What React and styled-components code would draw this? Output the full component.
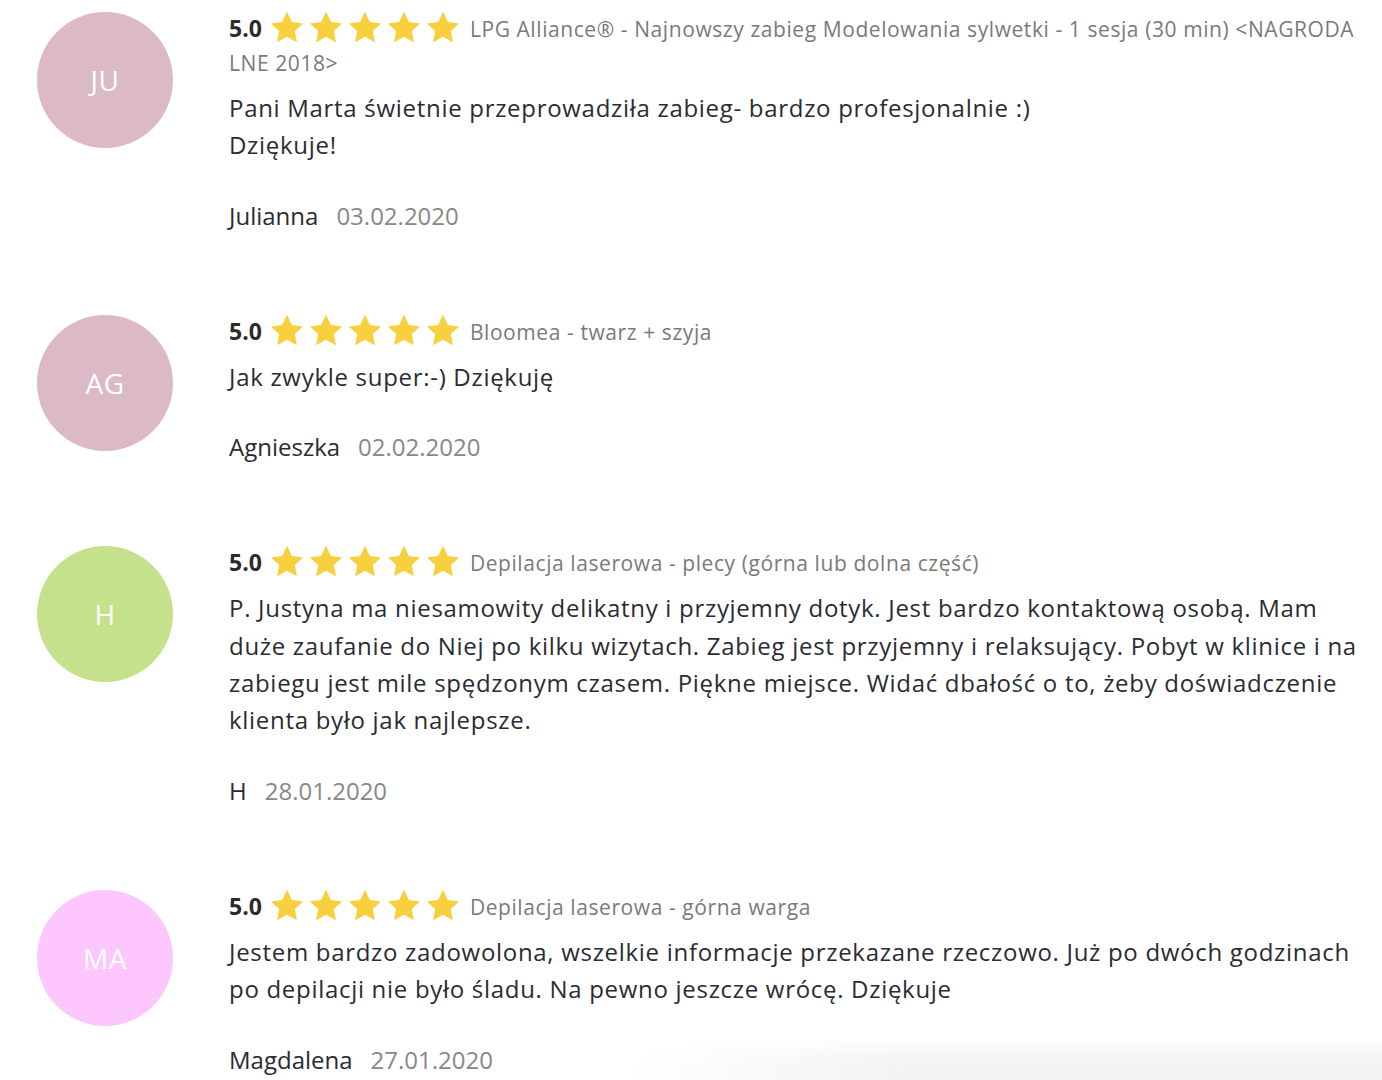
import React from "react";
import styled, { createGlobalStyle } from "styled-components";

const Global = createGlobalStyle`
  html, body { margin: 0; padding: 0; background: #ffffff; }
  body { font-family: "Open Sans", "Noto Sans", sans-serif; }
`;

const Page = styled.div`
  position: relative;
  width: 1382px;
  height: 1080px;
  overflow: hidden;
  background: #fff;
  padding: 11px 16px 0 37px;
  box-sizing: border-box;
  display: flex;
  flex-direction: column;
  gap: 81px;
`;

const Review = styled.div`
  display: flex;
  align-items: flex-start;
  gap: 56px;
`;

const Avatar = styled.div`
  flex: 0 0 136px;
  width: 136px;
  height: 136px;
  margin-top: 1px;
  border-radius: 50%;
  background: ${(p) => p.$color};
  color: #fff;
  display: flex;
  align-items: center;
  justify-content: center;
  font-size: 28px;
  letter-spacing: 0.5px;
`;

const Content = styled.div`
  flex: 1;
  min-width: 0;
`;

const Header = styled.div`
  font-size: 21px;
  line-height: 34px;
  letter-spacing: 0.58px;
  color: #7a7a7a;
`;

const Score = styled.span`
  font-weight: 700;
  color: #2b2b2b;
  font-size: 23px;
  letter-spacing: 0;
  margin-right: 8px;
`;

const Stars = styled.span`
  display: inline-flex;
  gap: 5px;
  vertical-align: -8px;
  margin-right: 10px;
`;

const Body = styled.p`
  margin: 9px 0 0;
  font-size: 24px;
  line-height: 37.4px;
  letter-spacing: 0.7px;
  color: #2b2b33;
`;

const Footer = styled.div`
  margin-top: 35px;
  display: flex;
  gap: 18px;
  font-size: 24px;
  line-height: 34px;
`;

const Name = styled.span`
  color: #2b2b33;
`;

const DateText = styled.span`
  color: #888;
`;

const Shade = styled.div`
  position: absolute;
  right: 0;
  bottom: 0;
  width: 760px;
  height: 42px;
  background: linear-gradient(to bottom, rgba(242,242,242,0) 0%, rgba(242,242,242,0.85) 50%, #f2f2f2 70%, #f2f2f2 100%);
  -webkit-mask-image: linear-gradient(to right, transparent 0, #000 300px);
  mask-image: linear-gradient(to right, transparent 0, #000 300px);
`;

const Star = () => (
  <svg width="34" height="34" viewBox="0 0 24 24">
    <path
      d="M12 0.6l3.45 7.1 7.850 1.05-5.75 5.45 1.45 7.8L12 18.25l-7 3.75 1.45-7.8L0.7 8.75l7.85-1.05z"
      fill="#f8cf3c"
    />
  </svg>
);

const reviews = [
  {
    initials: "JU",
    color: "#dcb9c6",
    service:
      "LPG Alliance® - Najnowszy zabieg Modelowania sylwetki - 1 sesja (30 min) <NAGRODA LNE 2018>",
    text: ["Pani Marta świetnie przeprowadziła zabieg- bardzo profesjonalnie :)", "Dziękuje!"],
    name: "Julianna",
    date: "03.02.2020",
  },
  {
    initials: "AG",
    color: "#dcb9c6",
    service: "Bloomea - twarz + szyja",
    text: ["Jak zwykle super:-) Dziękuję"],
    name: "Agnieszka",
    date: "02.02.2020",
  },
  {
    initials: "H",
    color: "#c6e18b",
    service: "Depilacja laserowa - plecy (górna lub dolna część)",
    text: [
      "P. Justyna ma niesamowity delikatny i przyjemny dotyk. Jest bardzo kontaktową osobą. Mam duże zaufanie do Niej po kilku wizytach. Zabieg jest przyjemny i relaksujący. Pobyt w klinice i na zabiegu jest mile spędzonym czasem. Piękne miejsce. Widać dbałość o to, żeby doświadczenie klienta było jak najlepsze.",
    ],
    name: "H",
    date: "28.01.2020",
  },
  {
    initials: "MA",
    color: "#fdc6fc",
    service: "Depilacja laserowa - górna warga",
    text: [
      "Jestem bardzo zadowolona, wszelkie informacje przekazane rzeczowo. Już po dwóch godzinach po depilacji nie było śladu. Na pewno jeszcze wrócę. Dziękuje",
    ],
    name: "Magdalena",
    date: "27.01.2020",
  },
];

export default function App() {
  return (
    <>
      <Global />
      <Page>
        {reviews.map((r) => (
          <Review key={r.name}>
            <Avatar $color={r.color}>{r.initials}</Avatar>
            <Content>
              <Header>
                <Score>5.0</Score>
                <Stars>
                  <Star />
                  <Star />
                  <Star />
                  <Star />
                  <Star />
                </Stars>
                {r.service}
              </Header>
              <Body>
                {r.text.map((t, i) => (
                  <React.Fragment key={i}>
                    {i > 0 && <br />}
                    {t}
                  </React.Fragment>
                ))}
              </Body>
              <Footer>
                <Name>{r.name}</Name>
                <DateText>{r.date}</DateText>
              </Footer>
            </Content>
          </Review>
        ))}
        <Shade />
      </Page>
    </>
  );
}
